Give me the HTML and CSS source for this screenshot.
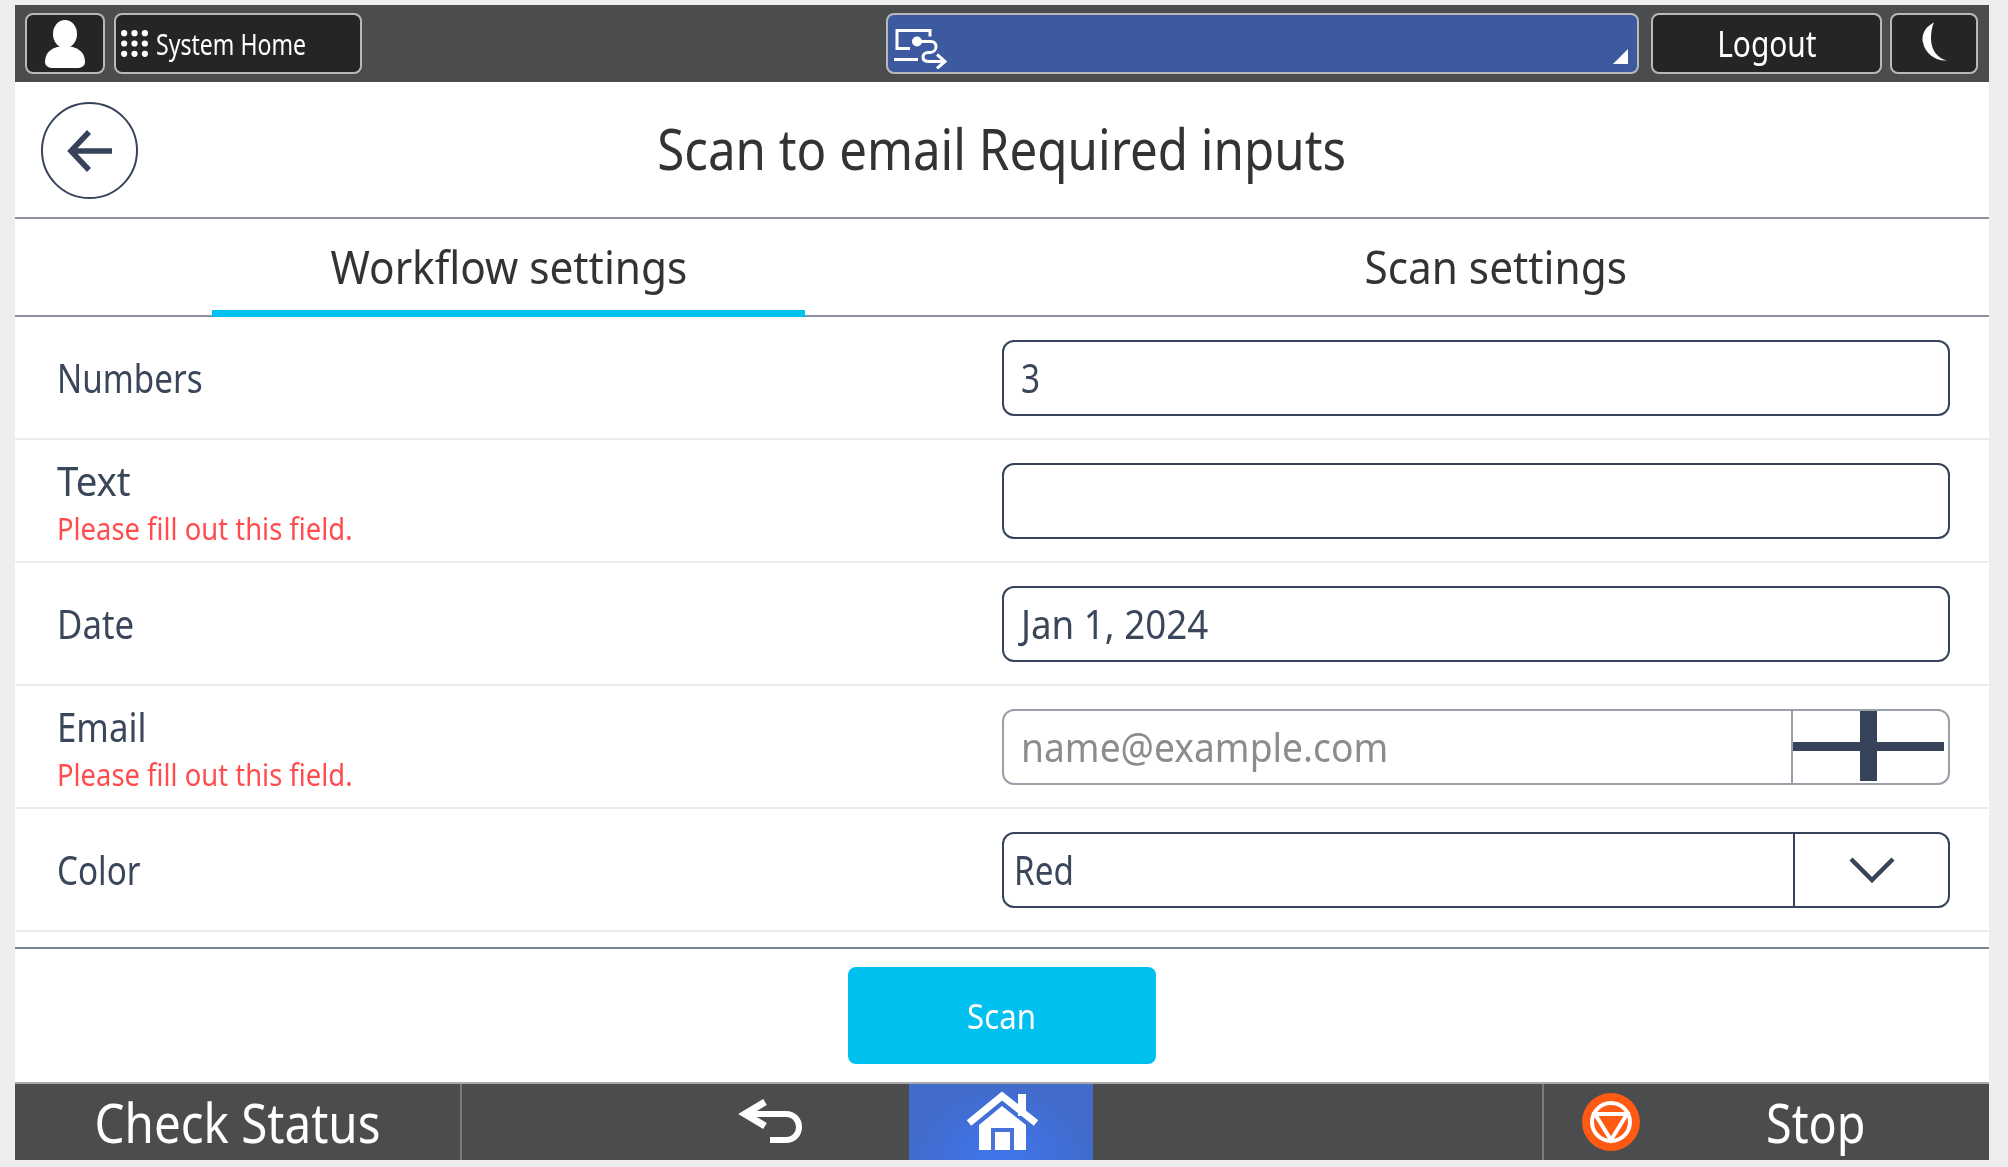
FILE: index.html
```html
<!DOCTYPE html>
<html lang="en">
<head>
<meta charset="utf-8">
<title>Scan to email Required inputs</title>
<link rel="stylesheet" href="styles.css">
</head>
<body>
<div class="screen">
  <header class="topbar">
    <button class="tbtn user"><svg class="soft" width="44" height="48" viewBox="0 0 44 48"><ellipse cx="22" cy="14" rx="12" ry="14" fill="#fff"/><path d="M2 42c0-11 9-16 20-16s20 5 20 16c0 4-4 6-8 6H10c-4 0-8-2-8-6z" fill="#fff"/></svg></button>
    <button class="tbtn home"><svg class="dots soft" width="29" height="29" viewBox="0 0 28 28" fill="#fff"><circle cx="4" cy="4" r="3"/><circle cx="14" cy="4" r="3"/><circle cx="24" cy="4" r="3"/><circle cx="4" cy="14" r="3"/><circle cx="14" cy="14" r="3"/><circle cx="24" cy="14" r="3"/><circle cx="4" cy="24" r="3"/><circle cx="14" cy="24" r="3"/><circle cx="24" cy="24" r="3"/></svg><span class="sq left t-sys">System Home</span></button>
    <div class="spacer-a"></div>
    <div class="job">
      <svg class="soft" width="70" height="50" viewBox="3 3.5 70 50" fill="none" stroke="#fff" stroke-width="3"><path d="M25 33H12V15h33v6M9 44h24"/><circle cx="32" cy="26" r="5" fill="#fff" stroke="none"/><path d="M32 26h14c3 0 5 2 5 5s-2 6-6 6h-2c-3 0-5 2-5 4.500s2 4.500 6 4.500h14M52 39l8 7-8 7"/></svg>
      <span class="corner"></span>
    </div>
    <button class="tbtn logout"><span class="sq t-logout">Logout</span></button>
    <button class="tbtn moon"><svg class="soft" width="84" height="57" viewBox="0 6.500 84 57"><path d="M42 14C30 20 30 30 31 34c2 11 13 19 24 18-9-2-16-10-16-22 0-6 1-12 3-16z" fill="#fff"/></svg></button>
  </header>

  <div class="titlebar">
    <button class="back"><svg width="46" height="42" viewBox="0 0 46 42" fill="none" stroke="#36435a" stroke-width="5.500"><path d="M45 21H5M22 2 4 21l18 19"/></svg></button>
    <h1 class="title"><span class="sq t-title">Scan to email Required inputs</span></h1>
  </div>

  <nav class="tabs">
    <div class="tab active"><span class="sq t-tab">Workflow settings</span></div>
    <div class="tab"><span class="sq t-tab">Scan settings</span></div>
  </nav>

  <main class="form">
    <div class="row">
      <div class="lab"><span class="sq left name">Numbers</span></div>
      <div class="field"><span class="sq left val">3</span></div>
    </div>
    <div class="row">
      <div class="lab two"><span class="sq left name n-text">Text</span><span class="sq left err">Please fill out this field.</span></div>
      <div class="field"></div>
    </div>
    <div class="row">
      <div class="lab"><span class="sq left name n-wide">Date</span></div>
      <div class="field"><span class="sq left val v-date">Jan 1, 2024</span></div>
    </div>
    <div class="row">
      <div class="lab two"><span class="sq left name n-wide">Email</span><span class="sq left err">Please fill out this field.</span></div>
      <div class="field muted"><span class="sq left val ph">name@example.com</span>
        <div class="addon plus soft"><span class="plus-h"></span><span class="plus-v"></span></div>
      </div>
    </div>
    <div class="row">
      <div class="lab"><span class="sq left name">Color</span></div>
      <div class="field select"><span class="sq left val">Red</span>
        <div class="addon"><svg width="46" height="26" viewBox="0 0 46 26" fill="none" stroke="#36435a" stroke-width="4.5"><path d="M2 2l21 21L44 2"/></svg></div>
      </div>
    </div>
  </main>

  <div class="actions"><button class="scan"><span class="sq t-scan">Scan</span></button></div>

  <footer class="bottombar">
    <div class="status"><span class="sq t-status">Check Status</span></div>
    <div class="backnav"><svg class="soft" width="80" height="70" viewBox="0 0 80 70" fill="none" stroke="#fff" stroke-width="6"><path d="M14 27h41c8 0 13 6 13 13s-5 13-13 13H39"/><path d="M34 15 14 27l20 12" stroke-width="7"/></svg></div>
    <div class="homebtn"><svg class="soft" width="120" height="75" viewBox="0 0 120 75"><path d="M77 9h8v22h-8z" fill="#fff"/><path d="M28 38 61 11l34 27" fill="none" stroke="#fff" stroke-width="7"/><path d="M38 40 61 21l24 19v25H38z" fill="#fff"/><path d="M50 43h23v22H50z" fill="#4a72d8"/><path d="M54 47h15v18H54z" fill="#fff"/></svg></div>
    <div class="stop"><svg width="58" height="58" viewBox="0 0 58 58"><circle cx="29" cy="29" r="29" fill="#ff5a14"/><g fill="none" stroke="#fff" stroke-width="4"><circle cx="29" cy="29" r="19"/><path d="M13 21h32L29 47z"/></g></svg><span class="sq stoptxt">Stop</span></div>
  </footer>
</div>
</body>
</html>
```
FILE: styles.css
```css
* { box-sizing: border-box; }
html, body { margin: 0; height: 100%; }
body {
  background: #eeeeee;
  padding: 5px 19px 7px 15px;
  font-family: "Noto Sans", "Open Sans", sans-serif;
  overflow: hidden;
}
button { font: inherit; padding: 0; cursor: pointer; }
.screen {
  height: 1155px;
  background: #fff;
  display: flex;
  flex-direction: column;
}
.sq {
  display: inline-block;
  white-space: nowrap;
  transform: scaleX(0.83);
  filter: blur(0.5px);
}
.soft { filter: blur(0.5px); }
.left { transform-origin: left center; }

.topbar {
  height: 77px;
  flex: none;
  background: #4b4c4e;
  display: flex;
  align-items: flex-start;
  padding: 8px 11px 0 10px;
}
.tbtn {
  height: 61px;
  background: #252525;
  color: #fff;
  border: 2px solid #b9b9b9;
  border-radius: 8px;
  display: flex;
  align-items: center;
  justify-content: center;
}
.user { width: 80px; margin-right: 9px; }
.home { width: 248px; justify-content: flex-start; padding-left: 4px; }
.dots { margin-right: 7px; flex: none; }
.t-sys { font-size: 29px; transform: scaleX(0.796); }
.spacer-a { width: 524px; }
.job {
  width: 753px;
  height: 61px;
  background: #3d5aa0;
  border: 2px solid #b9b9b9;
  border-radius: 8px;
  margin-right: 12px;
  position: relative;
  display: flex;
  align-items: center;
}
.corner {
  position: absolute;
  right: 9px;
  bottom: 8px;
  border-style: solid;
  border-width: 0 0 15px 15px;
  border-color: transparent transparent #fff transparent;
}
.logout { width: 231px; margin-right: 8px; }
.t-logout { font-size: 36px; }
.moon { width: 88px; }

.titlebar {
  height: 137px;
  flex: none;
  border-bottom: 2px solid #8a90a0;
  display: flex;
  align-items: center;
  position: relative;
  justify-content: center;
  padding-bottom: 2px;
}
.back {
  position: absolute;
  left: 26px;
  top: 20px;
  width: 97px;
  height: 97px;
  border: 2px solid #36435a;
  border-radius: 50%;
  background: #fff;
  display: flex;
  align-items: center;
  justify-content: center;
}
.title { margin: 0; font-size: 57px; font-weight: 400; color: #333; line-height: 1; }
.t-title { transform: scaleX(0.864); }

.tabs {
  height: 98px;
  flex: none;
  display: grid;
  grid-template-columns: 1fr 1fr;
  border-bottom: 2px solid #8a90a0;
}
.tab {
  display: flex;
  align-items: center;
  justify-content: center;
  font-size: 46px;
  color: #333;
  position: relative;
  padding-bottom: 3px;
}
.t-tab { transform: scaleX(0.92); }
.tab.active::after {
  content: "";
  position: absolute;
  left: 20%;
  width: 60%;
  bottom: -2px;
  height: 7px;
  background: #00c0f0;
}

.form { flex: none; }
.row {
  height: 123px;
  border-bottom: 2px solid #ececec;
  display: flex;
  align-items: center;
  padding: 0 39px 0 42px;
  justify-content: space-between;
}
.lab { display: flex; flex-direction: column; align-items: flex-start; }
.lab.two { padding-top: 2px; }
.name { font-size: 40px; color: #3a465a; line-height: 52px; }
.n-text { transform: scaleX(0.96); }
.n-wide { transform: scaleX(0.87); }
.err { font-size: 31px; color: #ff4d4f; line-height: 42px; transform: scaleX(0.883); }
.field {
  width: 948px;
  height: 76px;
  border: 2px solid #36435a;
  border-radius: 12px;
  display: flex;
  align-items: center;
  justify-content: space-between;
  padding-left: 17px;
  overflow: hidden;
}
.val { font-size: 40px; color: #3a465a; }
.v-date { transform: scaleX(0.918); }
.ph { color: #8c8c8c; transform: scaleX(0.93); }
.muted { border-color: #9aa0aa; }
.select { padding-left: 10px; }
.addon {
  width: 155px;
  height: 100%;
  border-left: 2px solid #36435a;
  display: flex;
  align-items: center;
  justify-content: center;
  flex: none;
  position: relative;
}
.muted .addon { border-left-color: #9aa0aa; width: 157px; }
.plus-h { position: absolute; left: 0; right: 4px; top: 31px; height: 9px; background: #36435a; }
.plus-v { position: absolute; left: 67px; top: 0; bottom: 2px; width: 17px; background: #36435a; }

.actions {
  flex: none;
  margin-top: 15px;
  height: 135px;
  border-top: 2px solid #7d8494;
  display: flex;
  justify-content: center;
  padding-top: 18px;
}
.scan {
  width: 308px;
  height: 97px;
  background: #00c0f0;
  border: 0;
  border-radius: 8px;
  color: #fff;
}
.t-scan { font-size: 34px; transform: scaleX(0.917); }

.bottombar {
  flex: none;
  height: 78px;
  background: #4b4c4e;
  border-top: 2px solid #a8a8a8;
  display: flex;
  color: #fff;
  font-size: 54px;
}
.status {
  width: 447px;
  border-right: 2px solid #7a7a7a;
  display: flex;
  align-items: center;
  justify-content: center;
}
.t-status { transform: scaleX(0.88); }
.backnav {
  width: 447px;
  display: flex;
  align-items: center;
  justify-content: center;
  padding-left: 170px;
}
.homebtn {
  width: 184px;
  background: radial-gradient(ellipse at 50% 100%, #3f76ee, #426bcb 70%);
  display: flex;
  align-items: flex-end;
  justify-content: center;
}
.stop {
  margin-left: auto;
  width: 447px;
  border-left: 2px solid #7a7a7a;
  display: flex;
  align-items: center;
  padding-left: 38px;
}
.stoptxt { margin-left: 126px; transform-origin: left center; transform: scaleX(0.865); }
```
